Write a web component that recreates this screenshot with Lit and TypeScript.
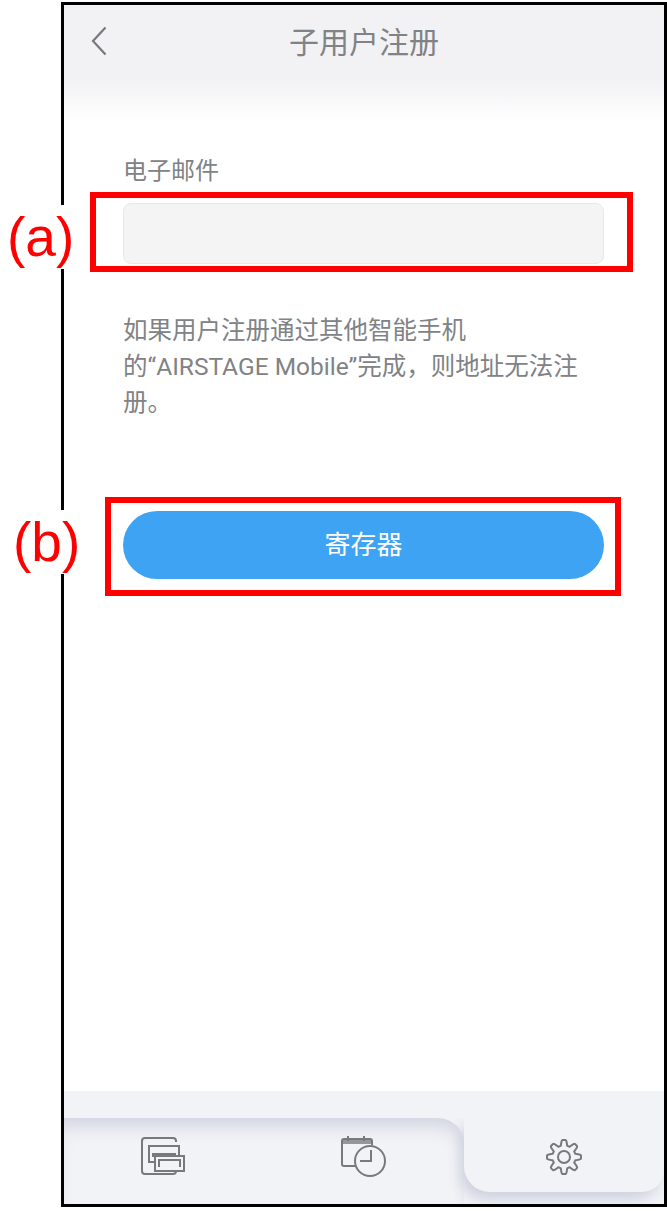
import { LitElement, html, css, svg } from "lit";
import { customElement } from "lit/decorators.js";

function gearPath(cx: number, cy: number): string {
  const pts: string[] = [];
  const n = 192;
  for (let i = 0; i < n; i++) {
    const t = (i / n) * Math.PI * 2;
    const wave = Math.max(-1, Math.min(1, 1.6 * Math.cos(8 * t)));
    const r = 14.3 + 2.7 * wave;
    pts.push(`${(cx + r * Math.sin(t)).toFixed(2)} ${(cy - r * Math.cos(t)).toFixed(2)}`);
  }
  return `M${pts.join("L")}Z`;
}

@customElement("app-root")
export class AppRoot extends LitElement {
  static styles = css`
    :host { display: block; width: 667px; height: 1211px; position: relative; background: #fff; overflow: hidden;
      font-family: Roboto, "Noto Sans CJK SC", "Noto Sans", sans-serif; color: #808285; }
    .page { box-sizing: border-box; width: 667px; height: 1211px; padding: 2px 0 4px 61px; }
    .phone { box-sizing: border-box; width: 606px; height: 100%; border: 3px solid #000; display: flex; flex-direction: column; background: #fff; }
    .header { height: 118px; flex: none; display: flex; justify-content: center; position: relative;
      background: linear-gradient(#f2f2f5 0, #f2f2f5 62%, #ffffff 100%); }
    .title { font-size: 30px; line-height: 44px; margin-top: 16px; }
    .back { position: absolute; left: 26px; top: 21px; stroke-width: 2.2; }
    .content { flex: 1; padding: 30px 57px 0 59px; display: flex; flex-direction: column; }
    .label { font-size: 24px; line-height: 36px; height: 36px; }
    input { box-sizing: border-box; display: block; width: 481px; height: 61px; margin-top: 14px; padding: 0; background: #f4f4f4;
      border: 1px solid #e8e8e8; border-radius: 8px; outline: none; }
    .note { margin: 49px 0 0; font-size: 24.5px; line-height: 36px; width: 470px; }
    .submit { width: 481px; height: 68px; margin-top: 90px; border: 0; border-radius: 34px; background: #3ea3f3; color: #fff;
      font: inherit; font-size: 26px; line-height: 68px; padding: 0; }
    .nav { height: 113px; flex: none; background: #f2f3f6; padding-top: 27px; box-sizing: border-box; display: flex; overflow: hidden; }
    .tabs { flex: 1; display: flex; border-top-right-radius: 26px; background: #f2f3f6;
      box-shadow: inset 0 16px 18px -8px #d0d4e1; }
    .tab { display: flex; align-items: center; justify-content: center; padding-bottom: 10px; }
    .tab.a { width: 198px; }
    .tab.b { width: 202px; }
    .active { width: 200px; flex: none; clip-path: inset(0 0 0 -30px); }
    .active-bar { height: 74px; background: #f2f3f6; border-bottom-left-radius: 26px; border-bottom-right-radius: 22px;
      box-shadow: -5px 8px 14px -1px #cdd1df;
      display: flex; align-items: center; justify-content: center; }
    .active-bar svg { position: relative; top: 2px; }
    svg { display: block; fill: none; stroke: #77797c; stroke-width: 2; }
    .box { position: absolute; border: 6px solid #ff0000; box-sizing: border-box; }
    .box.a { left: 90px; top: 192px; width: 543px; height: 80px; }
    .box.b { left: 105px; top: 497px; width: 516px; height: 99px; }
    .tag { position: absolute; font-family: "Liberation Sans", Arial, sans-serif; font-size: 55px; line-height: 64px; color: #ff0000; background: #fff; }
    .tag.a { left: 7px; top: 205px; }
    .tag.b { left: 13px; top: 510px; }
  `;

  render() {
    return html`
      <div class="page">
        <div class="phone">
          <div class="header">
            <svg class="back" width="18" height="30" viewBox="0 0 18 30"><path d="M15.500 1.500 3 15l12.500 13.500"/></svg>
            <div class="title">子用户注册</div>
          </div>
          <div class="content">
            <div class="label">电子邮件</div>
            <input type="text" aria-label="电子邮件" />
            <p class="note">如果用户注册通过其他智能手机的“AIRSTAGE Mobile”完成，则地址无法注册。</p>
            <button class="submit">寄存器</button>
          </div>
          <div class="nav">
            <div class="tabs">
              <div class="tab a">
                <svg width="46" height="38" viewBox="0 0 46 38">
                  <path d="M36 5V4a3 3 0 0 0-3-3H5a3 3 0 0 0-3 3v30a3 3 0 0 0 3 3h28a3 3 0 0 0 3-3v-3"/>
                  <rect x="9" y="9" width="30" height="16"/><rect x="15" y="19" width="29" height="15" fill="#f2f3f6"/>
                  <path d="M13 20V17h23M19 30v-7h21v7"/>
                </svg>
              </div>
              <div class="tab b">
                <svg width="46" height="42" viewBox="0 0 46 42">
                  <path d="M18 31H4a2 2 0 0 1-2-2V6a2 2 0 0 1 2-2h26a2 2 0 0 1 2 2v4"/>
                  <path d="M2 6h30M2 8h30" stroke-width="1.500"/><path d="M8 1v5M24 1v5"/>
                  <circle cx="30" cy="26" r="15" fill="#f2f3f6"/><path d="M31 15v11H20"/>
                </svg>
              </div>
            </div>
            <div class="active">
              <div class="active-bar">
                <svg width="36" height="36" viewBox="0 0 36 36">
                  ${svg`<path d=${gearPath(18, 18)} stroke-linejoin="round"/>`}
                  <circle cx="18" cy="18" r="6"/>
                </svg>
              </div>
            </div>
          </div>
        </div>
      </div>
      <div class="box a"></div>
      <div class="box b"></div>
      <div class="tag a">(a)</div>
      <div class="tag b">(b)</div>
    `;
  }
}
